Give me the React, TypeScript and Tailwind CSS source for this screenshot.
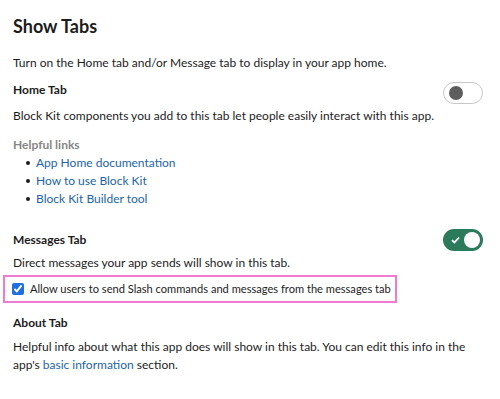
import { useState } from 'react';

function Toggle({ on, onClick }: { on: boolean; onClick: () => void }) {
    return (
        <button
            onClick={onClick}
            className={`relative w-[40px] h-[22px] rounded-full shrink-0 ${on ? 'bg-[#2b7a5b]' : 'bg-white border border-[#c8c8c8]'}`}
        >
            {on ? (
                <>
                    <svg className="absolute left-[8px] top-[7px]" width="9" height="8" viewBox="0 0 9 8">
                        <path d="M1 4.2 L3.4 6.5 L8 1.5" fill="none" stroke="white" strokeWidth="1.8" />
                    </svg>
                    <span className="absolute right-[3px] top-[3px] w-[16px] h-[16px] rounded-full bg-white" />
                </>
            ) : (
                <span className="absolute left-[5px] top-[3px] w-[14px] h-[14px] rounded-full bg-[#5e5e5e]" />
            )}
        </button>
    );
}

const links = ['App Home documentation', 'How to use Block Kit', 'Block Kit Builder tool'];

export default function App() {
    const [homeTab, setHomeTab] = useState(false);
    const [messagesTab, setMessagesTab] = useState(true);
    const [allowSlash, setAllowSlash] = useState(true);

    return (
        <div className="w-[500px] h-[399px] bg-white text-[#1d1c1d] text-[12px] leading-[18px] px-[13px] pt-[14px]" style={{ fontFamily: 'Lato, "Noto Sans", sans-serif' }}>
            <h1 className="text-[18px] leading-[24px] font-bold">Show Tabs</h1>

            <p className="mt-[16px]">Turn on the Home tab and/or Message tab to display in your app home.</p>

            {/* Home tab */}
            <div className="flex items-start justify-between h-[18px] mt-[9px]">
                <h2 className="font-bold">Home Tab</h2>
                <div className="mr-[4px] mt-[1px]">
                    <Toggle on={homeTab} onClick={() => setHomeTab(!homeTab)} />
                </div>
            </div>
            <p className="mt-[8px]">Block Kit components you add to this tab let people easily interact with this app.</p>

            <div className="mt-[11px]">
                <div className="font-bold text-[#868686]">Helpful links</div>
                <ul>
                    {links.map(l => (
                        <li key={l} className="flex items-center pl-[13px]">
                            <span className="w-[4px] h-[4px] rounded-full bg-[#1d1c1d] mr-[6px]" />
                            <a href="#" className="text-[#1d64a8]">{l}</a>
                        </li>
                    ))}
                </ul>
            </div>

            {/* Messages tab */}
            <div className="flex items-start justify-between h-[18px] mt-[23px]">
                <h2 className="font-bold">Messages Tab</h2>
                <div className="mr-[4px] mt-[-2px]">
                    <Toggle on={messagesTab} onClick={() => setMessagesTab(!messagesTab)} />
                </div>
            </div>
            <p className="mt-[5px]">Direct messages your app sends will show in this tab.</p>

            <label className="flex items-center gap-[6px] mt-[3px] ml-[-10px] w-[394px] h-[28px] border-2 border-[#f07ad0] pl-[7px] whitespace-nowrap">
                <input
                    type="checkbox"
                    checked={allowSlash}
                    onChange={() => setAllowSlash(!allowSlash)}
                    className="w-[12px] h-[12px] m-0 shrink-0 accent-[#1f6fe0]"
                />
                <span className="text-[11.1px]">Allow users to send Slash commands and messages from the messages tab</span>
            </label>

            {/* About tab */}
            <h2 className="font-bold mt-[11px]">About Tab</h2>
            <p className="mt-[6px] max-w-[460px]">
                Helpful info about what this app does will show in this tab. You can edit this info in the app's{' '}
                <a href="#" className="text-[#1d64a8]">basic information</a> section.
            </p>
        </div>
    );
}
